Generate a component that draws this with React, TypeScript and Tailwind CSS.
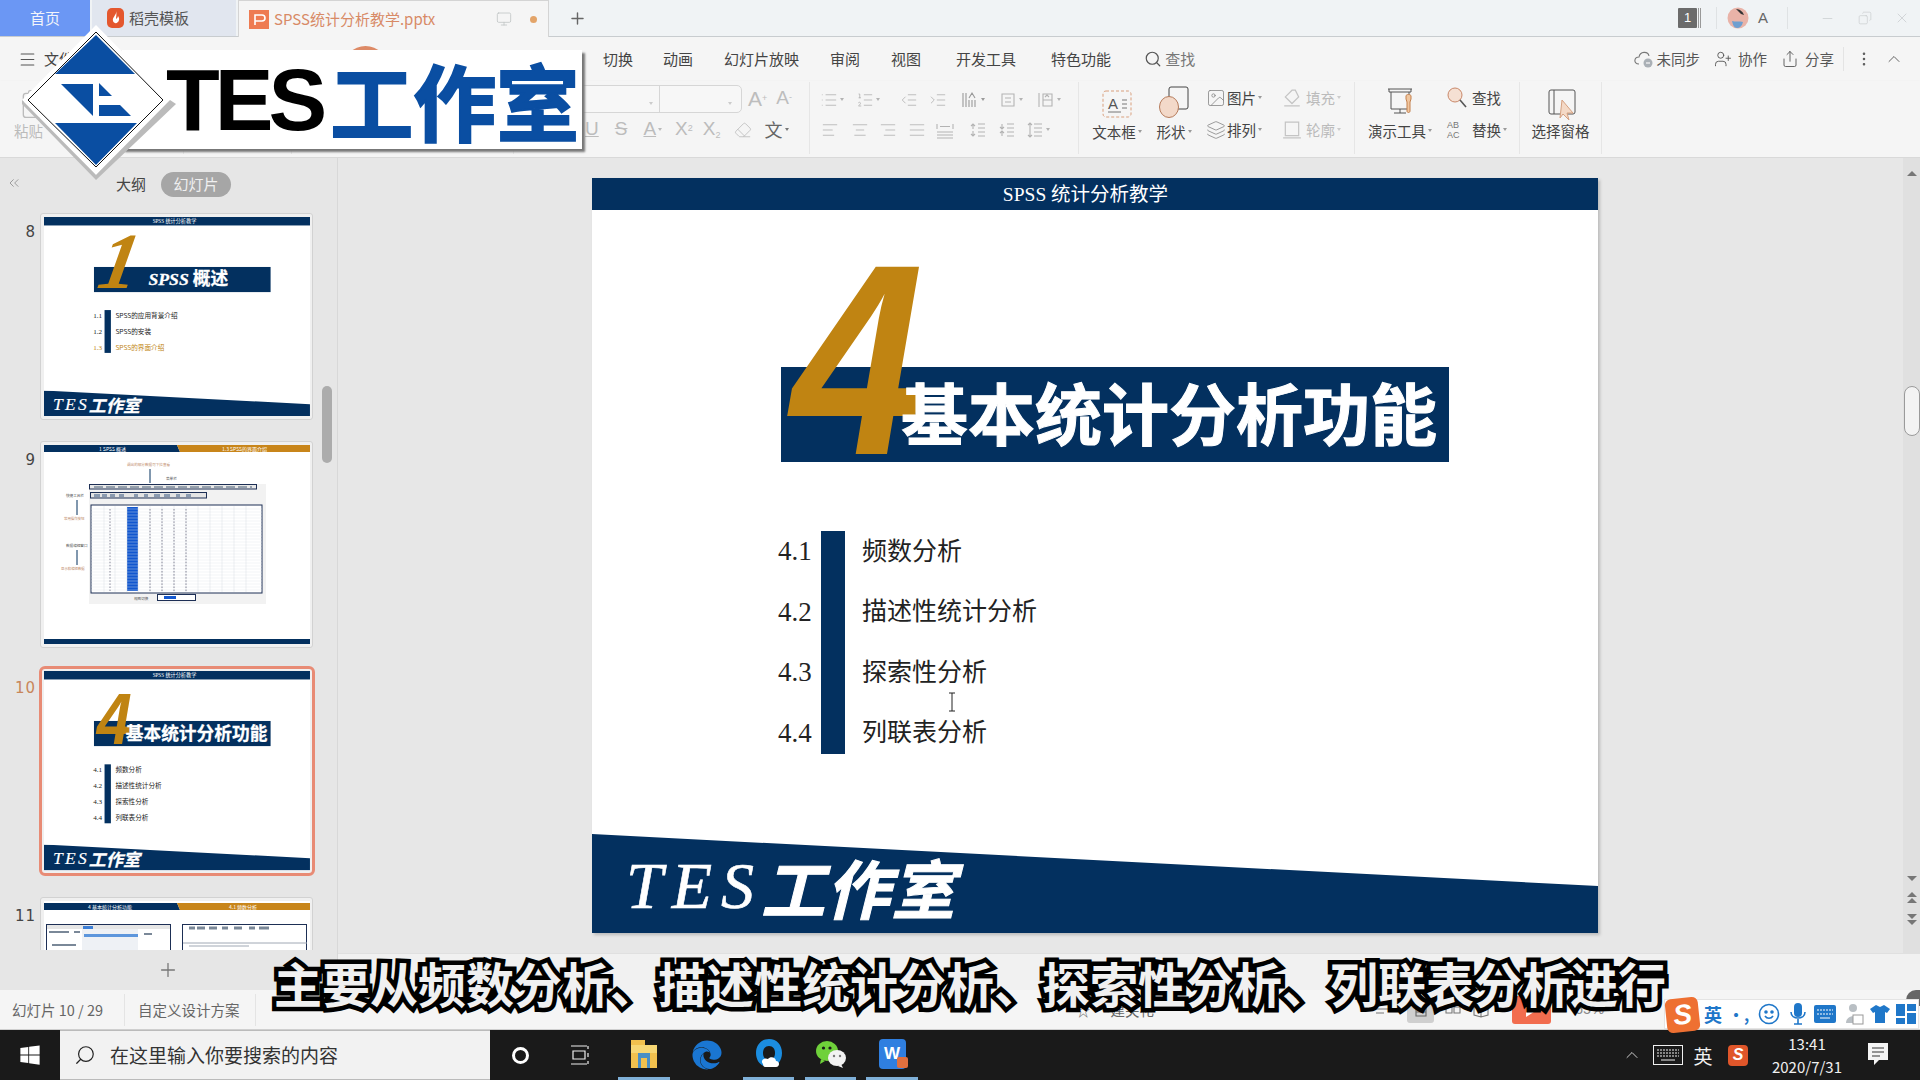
import React from 'react';
import { Menu, Search, UserPlus, Share, MoreVertical, ChevronUp, Plus, Monitor, Minus, X, Copy, ChevronsLeft, List, ListOrdered, IndentDecrease, IndentIncrease, AlignLeft, AlignCenter, AlignRight, AlignJustify, Image, Layers, Eraser, Clipboard } from 'lucide-react';
import { FaWindows, FaEdge } from 'react-icons/fa';

const Caret = ({ c = '#9a9a9a' }: { c?: string }) => (
  <span className="ml-[2px] inline-block h-0 w-0 border-x-[2.5px] border-t-[3px] border-x-transparent" style={{ borderTopColor: c }} />
);

const LineIcon = ({ d, c = '#b5b5b5', s = 18, className = '' }: { d: string; c?: string; s?: number; className?: string }) => (
  <svg width={s} height={s} viewBox="0 0 18 18" fill="none" stroke={c} strokeWidth="1.1" className={`shrink-0 ${className}`}><path d={d} /></svg>
);

function Header() {
  return (
    <div className="relative z-0 flex h-[37px] shrink-0 items-stretch border-b border-[#c8cccf] bg-[#f0f3f5] text-[15px]">
      <div className="flex w-[90px] items-center justify-center bg-[#6b97f4] text-[#f2f5fb]">首页</div>
      <div className="ml-[2px] flex w-[144px] items-center gap-[5px] bg-[#e1e6ef] pl-[15px] text-[#555]">
        <svg width="17" height="20" viewBox="0 0 17 20"><rect width="17" height="20" rx="5" fill="#e4572e" /><path d="M9 3c1 4-4 6-3 10 1 3 5 3 6-1 .5-2-.5-3-1-4-.5 2-1 2-2 3 0-3 1-5 0-8z" fill="#fff" /></svg>
        <span>稻壳模板</span>
      </div>
      <div className="ml-[2px] -mb-px flex w-[311px] items-center border-x border-t border-[#d4d4d4] bg-[#f5f5f5] pl-[10px] text-[#d88a66]">
        <svg width="20" height="19" viewBox="0 0 20 19"><rect width="20" height="19" fill="#ee7b52" /><path d="M6 15V5h7a3 3 0 0 1 0 6H6" fill="none" stroke="#fff" strokeWidth="1.6" /></svg>
        <span className="ml-[5px] w-[222px] whitespace-nowrap">SPSS统计分析教学.pptx</span>
        <Monitor size={16} strokeWidth={1.2} className="text-[#bfc4c4]" />
        <span className="ml-[18px] h-[7px] w-[7px] rounded-full bg-[#e3a469]" />
      </div>
      <div className="ml-[19px] flex items-center"><Plus size={19} strokeWidth={1.8} className="text-[#666]" /></div>
      <div className="ml-auto flex items-center">
        <span className="flex h-[20px] w-[19px] items-center justify-center rounded-[1px] bg-[#6b6b6b] [font-family:'Liberation_Sans',sans-serif] text-[13px] text-white">1</span>
        <span className="ml-[1px] h-[20px] w-[1px] bg-[#999]" /><span className="ml-[1px] h-[20px] w-[1px] bg-[#999]" />
        <span className="ml-[15px] h-[22px] w-[1px] bg-[#dfe2e4]" />
        <svg width="22" height="22" viewBox="0 0 22 22" className="ml-[10px]"><circle cx="11" cy="11" r="10.5" fill="#e9b3a8" /><path d="M5 14c3 1 8 0 11 1-1 4-3 6-6 6-3 0-4-3-5-7z" fill="#6f9fd0" /><path d="M9 2c4 0 7 3 8 6l-3-1-5-5z" fill="#333" /></svg>
        <span className="ml-[9px] w-[14px] [font-family:'Liberation_Sans',sans-serif] text-[15px] text-[#666]">A</span>
        <span className="ml-[15px] h-[22px] w-[1px] bg-[#dfe2e4]" />
        <Minus size={15} strokeWidth={1} className="ml-[32px] text-[#c2c6c8]" />
        <Copy size={14} strokeWidth={1} className="ml-[23px] -scale-x-100 text-[#c2c6c8]" />
        <X size={16} strokeWidth={1} className="ml-[22px] mr-[10px] text-[#c2c6c8]" />
      </div>
    </div>
  );
}

function MenuRow() {
  const items = [
    ['切换', 'ml-[0px]'], ['动画', 'ml-[30px]'], ['幻灯片放映', 'ml-[31px]'], ['审阅', 'ml-[31px]'], ['视图', 'ml-[31px]'], ['开发工具', 'ml-[35px]'], ['特色功能', 'ml-[35px]'],
  ];
  return (
    <div className="flex h-[44px] shrink-0 items-center text-[15px] text-[#444]">
      <Menu size={19} strokeWidth={1.3} className="ml-[18px] text-[#555]" />
      <span className="ml-[7px]">文件</span>
      <span className="ml-[269px] h-[26px] w-[45px] rounded-t-full bg-[#dd8a66]" />
      <div className="ml-[215px] flex">
        {items.map(([t, m]) => <span key={t} className={m}>{t}</span>)}
      </div>
      <Search size={18} strokeWidth={1.6} className="ml-[33px] text-[#555]" />
      <span className="ml-[3px] text-[#777]">查找</span>
      <div className="ml-auto flex items-center text-[14.5px] text-[#555]">
        <svg width="22" height="20" viewBox="0 0 22 20" fill="none" stroke="#777" strokeWidth="1.1"><path d="M5 15c-6 0-5-7 0-7 1-6 9-6 10-1" /><circle cx="14" cy="14" r="4.5" fill="#aab0b6" stroke="none" /><path d="M12 14h4" stroke="#fff" /></svg>
        <span className="ml-[1px]">未同步</span>
        <UserPlus size={18} strokeWidth={1.2} className="ml-[14px]" />
        <span className="ml-[6px]">协作</span>
        <Share size={18} strokeWidth={1.2} className="ml-[14px]" />
        <span className="ml-[6px]">分享</span>
        <span className="ml-[9px] h-[24px] w-[1px] bg-[#e4e4e4]" />
        <MoreVertical size={18} strokeWidth={1.4} className="ml-[11px]" />
        <ChevronUp size={20} strokeWidth={1.1} className="ml-[11px] mr-[16px]" />
      </div>
    </div>
  );
}

const Group = ({ w, children, className = '' }: { w: string; children?: React.ReactNode; className?: string }) => (
  <div className={`relative h-[72px] shrink-0 border-r border-[#e6e6e6] ${w} ${className}`}>{children}</div>
);

const G = '#b3b3b3';
const Ribbon = () => (
  <div className="flex h-[77px] shrink-0 items-start border-b border-[#d9d9d9] pt-[1px] text-[14.5px] text-[#444] shadow-[0_1px_2px_#ddd]">
    <Group w="w-[184px]">
      <Clipboard size={32} strokeWidth={1} className="ml-[18px] mt-[6px] text-[#bbb]" />
      <span className="ml-[14px] block text-[#bbb]">粘贴</span>
    </Group>
    <Group w="w-[108px]" />
    <Group w="w-[222px]" />
    <Group w="w-[296px]" className="flex flex-col">
      <div className="mt-[2px] flex h-[29px] items-center">
        <div className="ml-[46px] flex h-[28px] w-[182px] items-center rounded-r-[5px] border border-[#d6d6d6] bg-[#f7f7f7]">
          <span className="ml-[86px]"><Caret c="#ccc" /></span>
          <span className="ml-[6px] h-full w-[1px] bg-[#d6d6d6]" />
          <span className="ml-[66px]"><Caret c="#ccc" /></span>
        </div>
        <span className="ml-[6px] [font-family:'Liberation_Sans',sans-serif] text-[21px] text-[#bdbdbd]">A<sup className="text-[9px]">+</sup></span>
        <span className="ml-[9px] [font-family:'Liberation_Sans',sans-serif] text-[19px] text-[#bdbdbd]">A<sup className="text-[9px]">-</sup></span>
      </div>
      <div className="mt-[2px] flex h-[29px] items-center [font-family:'Liberation_Sans',sans-serif] text-[19px] text-[#bcbcbc]">
        <span className="ml-[71px] underline">U</span>
        <span className="ml-[16px] line-through">S</span>
        <span className="ml-[16px] underline">A</span><Caret c="#bbb" />
        <span className="ml-[13px]">X<sup className="text-[9px]">2</sup></span>
        <span className="ml-[10px]">X<sub className="text-[9px]">2</sub></span>
        <Eraser size={18} strokeWidth={1.1} className="ml-[13px]" />
        <span className="ml-[13px] text-[18px] text-[#666] [font-family:'Noto_Sans_CJK_SC',sans-serif]">文</span><Caret c="#777" />
      </div>
    </Group>
    <Group w="w-[269px]" className="flex flex-col">
      <div className="mt-[3px] flex h-[29px] items-center">
        <List size={18} strokeWidth={1.1} color={G} className="ml-[10px]" /><Caret c={G} />
        <ListOrdered size={18} strokeWidth={1.1} color={G} className="ml-[12px]" /><Caret c={G} />
        <IndentDecrease size={18} strokeWidth={1.1} color={G} className="ml-[20px]" />
        <IndentIncrease size={18} strokeWidth={1.1} color={G} className="ml-[11px]" />
        <LineIcon d="M2 2v14M5 2v14M8 9v7M11 9v7M14 9v7M8 7l3-5 3 5" c="#999" className="ml-[14px]" /><Caret />
        <LineIcon d="M3 3h12v12H3zM6 7h6M6 11h6" c={G} className="ml-[14px]" /><Caret c={G} />
        <LineIcon d="M2 2v14M6 3h9v12H6zM6 9h9M8 6l2-2 2 2" c={G} className="ml-[14px]" /><Caret c={G} />
      </div>
      <div className="mt-[1px] flex h-[29px] items-center">
        <AlignLeft size={18} strokeWidth={1.1} color={G} className="ml-[11px]" />
        <AlignCenter size={18} strokeWidth={1.1} color={G} className="ml-[12px]" />
        <AlignRight size={18} strokeWidth={1.1} color={G} className="ml-[10px]" />
        <AlignJustify size={18} strokeWidth={1.1} color={G} className="ml-[11px]" />
        <LineIcon d="M1 3v5M17 3v5M4 5.5h10M1 11h16M1 14h16M1 17h16" c={G} className="ml-[10px]" />
        <LineIcon d="M9 3h7M9 7h7M9 11h7M9 15h7M4 8V3M2 5l2-2 2 2M4 10v5M2 13l2 2 2-2" c={G} className="ml-[15px]" />
        <LineIcon d="M9 3h7M9 7h7M9 11h7M9 15h7M4 3v5M2 6l2 2 2-2M4 15v-5M2 12l2-2 2 2" c={G} className="ml-[11px]" />
        <LineIcon d="M8 3h8M8 7h8M8 11h8M8 15h8M4 2v14M2 4l2-2 2 2M2 14l2 2 2-2" c={G} className="ml-[10px]" /><Caret c={G} />
      </div>
    </Group>
    <Group w="w-[276px]" className="flex">
      <div className="ml-[12px] flex w-[52px] flex-col items-center">
        <svg width="30" height="28" viewBox="0 0 30 28" className="mt-[8px]" fill="none"><rect x="1" y="1" width="28" height="26" rx="3" stroke="#d99f7d" strokeDasharray="3 2" /><text x="6" y="19" fontSize="15" fill="#555" fontFamily="Liberation Sans">A</text><path d="M6 22h13M20 10h5M20 14h5M20 18h5" stroke="#777" /></svg>
        <span className="mt-[3px] flex items-center whitespace-nowrap">文本框<Caret /></span>
      </div>
      <div className="ml-[8px] flex w-[46px] flex-col items-center">
        <svg width="32" height="34" viewBox="0 0 32 34" className="mt-[3px]" fill="none"><rect x="11" y="2" width="19" height="22" rx="2" stroke="#444" /><ellipse cx="11" cy="22" rx="9.5" ry="10.5" fill="#f3d9c9" stroke="#b67c5c" /></svg>
        <span className="mt-[2px] flex items-center whitespace-nowrap">形状<Caret /></span>
      </div>
      <div className="ml-[9px] flex w-[74px] flex-col gap-[10px] pt-[5px]">
        <span className="flex items-center whitespace-nowrap"><Image size={20} strokeWidth={1} className="mr-[1px] text-[#888]" />图片<Caret /></span>
        <span className="flex items-center whitespace-nowrap"><Layers size={20} strokeWidth={1} className="mr-[1px] text-[#888]" />排列<Caret /></span>
      </div>
      <div className="ml-[2px] flex w-[68px] flex-col gap-[10px] pt-[5px] text-[#bbb]">
        <span className="flex items-center whitespace-nowrap"><LineIcon s={20} d="M9 2L3 8l6 6 6-6-3-6zM2 16h14" c="#c4c4c4" className="mr-[4px]" />填充<Caret c="#ccc" /></span>
        <span className="flex items-center whitespace-nowrap"><LineIcon s={20} d="M3 2h12v12H3zM1 16h16" c="#c4c4c4" className="mr-[4px]" />轮廓<Caret c="#ccc" /></span>
      </div>
    </Group>
    <Group w="w-[165px]" className="flex">
      <div className="ml-[6px] flex w-[78px] flex-col items-center">
        <svg width="30" height="30" viewBox="0 0 30 30" fill="none" stroke="#555" className="mt-[4px]"><path d="M3 3h24M4 3v3h22V3M6 6v17h18V6M15 23v4M9 27h12" /><path d="M21 10c0-2 5-2 5 0v3l-1 3v9c0 2-3 2-3 0v-9l-1-3z" fill="#f0c69f" stroke="#c4804d" /></svg>
        <span className="mt-[4px] flex items-center whitespace-nowrap">演示工具<Caret /></span>
      </div>
      <div className="ml-[8px] flex flex-col gap-[10px] pt-[5px]">
        <span className="flex items-center whitespace-nowrap"><svg width="20" height="22" viewBox="0 0 20 22" fill="none" className="mr-[5px]"><circle cx="8" cy="8" r="7" fill="#f5e0d3" stroke="#c9886a" /><path d="M13 13l6 7" stroke="#555" strokeWidth="1.6" /></svg>查找</span>
        <span className="flex items-center whitespace-nowrap"><span className="mr-[3px] w-[22px] [font-family:'Liberation_Sans',sans-serif] text-[9px] leading-[10px] text-[#777]">AB<br />AC</span>替换<Caret /></span>
      </div>
    </Group>
    <Group w="w-[82px]" className="flex flex-col items-center">
      <svg width="30" height="36" viewBox="0 0 30 36" fill="none" className="-mb-[4px] mt-[6px]"><rect x="3" y="2" width="26" height="24" rx="2" stroke="#555" /><path d="M8 2v24" stroke="#555" /><path d="M16 12l11 13h-6l2 7-6-6-3 4z" fill="#f4d9c6" stroke="#d5a080" /></svg>
      <span className="whitespace-nowrap">选择窗格</span>
    </Group>
  </div>
);

const Navy = 'bg-[#03305f]';

function ListRows({ rows }: { rows: { n: string; t: string; hi?: boolean }[] }) {
  return (
    <div className="ml-[186px] flex">
      <div className="flex w-[43px] flex-col gap-[19.5px] [font-family:'Liberation_Serif',serif] text-[27px] text-[#222]">
        {rows.map(r => <span key={r.n} className={`flex h-[41px] items-center ${r.hi ? 'text-[#c08412]' : ''}`}>{r.n}</span>)}
      </div>
      <div className={`w-[24px] ${Navy}`} />
      <div className="ml-[17px] flex flex-col gap-[19.5px] [font-family:'Noto_Sans_CJK_SC',sans-serif] text-[25px] text-[#222]">
        {rows.map(r => <span key={r.n} className={`flex h-[41px] -translate-y-[2px] items-center whitespace-nowrap ${r.hi ? 'text-[#c08412]' : ''}`}>{r.t}</span>)}
      </div>
    </div>
  );
}

function SlideBody({ num, title, rows, serifNum, center }: { num: string; title: React.ReactNode; rows: { n: string; t: string; hi?: boolean }[]; serifNum?: boolean; center?: boolean }) {
  return (
    <div className="flex h-[755px] w-[1006px] flex-col bg-white">
      <div className={`flex h-[32px] shrink-0 items-center justify-center pr-[19px] pt-[1px] ${Navy} text-[19.5px] text-white`}>
        <span className="[font-family:'Liberation_Serif','Noto_Sans_CJK_SC',serif]">SPSS 统计分析教学</span>
      </div>
      <div className={`relative ml-[189px] mt-[157px] flex h-[95px] w-[668px] shrink-0 items-center ${Navy}`}>
        <span className={serifNum
          ? "absolute bottom-[-34px] left-[24px] -skew-x-[10deg] [font-family:'Liberation_Serif',serif] text-[300px] font-bold italic leading-none text-[#c08412]"
          : "absolute bottom-[-34px] left-[-8px] origin-right scale-x-[0.88] [font-family:'Liberation_Sans',sans-serif] text-[272px] font-bold italic leading-none text-[#c08412]"}>{num}</span>
        <span className={`relative -mt-[9px] whitespace-nowrap text-[67px] font-bold leading-none text-white [-webkit-text-stroke:1px_#fff] ${center ? 'ml-[206px]' : 'ml-[120px]'}`}>{title}</span>
      </div>
      <div className={rows.length === 3 ? 'mt-[68px]' : 'mt-[69px]'}><ListRows rows={rows} /></div>
      <div className={`mt-auto flex h-[99px] shrink-0 items-center pl-[34px] pt-[4px] ${Navy} [clip-path:polygon(0_0,100%_52.5%,100%_100%,0_100%)]`}>
        <span className="[font-family:'Liberation_Serif',serif] text-[66px] italic leading-none tracking-[9px] text-white [-webkit-text-stroke:0.6px_#fff]">TES</span>
        <span className="-ml-[2px] text-[64px] font-bold italic leading-none tracking-[1px] text-white [font-family:'Noto_Sans_CJK_SC',sans-serif] [-webkit-text-stroke:1px_#fff]">工作室</span>
      </div>
    </div>
  );
}

const rows10 = [{ n: '4.1', t: '频数分析' }, { n: '4.2', t: '描述性统计分析' }, { n: '4.3', t: '探索性分析' }, { n: '4.4', t: '列联表分析' }];
const rows8 = [{ n: '1.1', t: 'SPSS的应用背景介绍' }, { n: '1.2', t: 'SPSS的安装' }, { n: '1.3', t: 'SPSS的界面介绍', hi: true }];

const Thumb = ({ n, active, children, clip }: { n: string; active?: boolean; children: React.ReactNode; clip?: boolean }) => (
  <div className="flex h-[207px] shrink-0 items-start">
    <span className={`w-[40px] shrink-0 pr-[4px] pt-[8px] text-right [font-family:'DejaVu_Sans',sans-serif] text-[15px] tracking-[1px] ${active ? 'text-[#c8865a]' : 'text-[#444]'}`}>{n}</span>
    <div className={`shrink-0 overflow-hidden ${active ? '-ml-[1px] -mt-[3px] h-[210px] w-[276px] rounded-[6px] border-[3px] border-[#e88b75] p-[2px]' : 'h-[207px] w-[273px] rounded-[3px] border-[1.5px] border-[#d2d2d2] p-[2.5px]'} bg-[#f0f0f0]`}>
      <div className={`${clip ? 'h-[200px]' : 'h-[199.6px]'} w-[266px] overflow-hidden bg-white`}>{children}</div>
    </div>
  </div>
);

const Scaled = ({ children }: { children: React.ReactNode }) => (
  <div className="w-[1006px] origin-top-left scale-[0.2644]">{children}</div>
);

const Thumb9 = () => (
  <svg width="266" height="200" viewBox="0 0 266 200">
    <rect width="266" height="200" fill="#fff" />
    <path d="M0 0H133L136 7H0z" fill="#03305f" />
    <path d="M133 0H266V7H136z" fill="#c8851a" />
    <text x="55" y="6" fontSize="5" fill="#fff" fontFamily="Noto Sans CJK SC">1 SPSS 概述</text>
    <text x="178" y="6" fontSize="5" fill="#fff" fontFamily="Noto Sans CJK SC">1.3 SPSS的界面介绍</text>
    <text x="83" y="21" fontSize="3.6" fill="#c08a6a" fontFamily="Noto Sans CJK SC">调出的部分数据可下拉查看</text>
    <path d="M106 24v14" stroke="#03305f" />
    <text x="122" y="35" fontSize="3.6" fill="#555" fontFamily="Noto Sans CJK SC">菜单栏</text>
    <rect x="45" y="39" width="177" height="120" fill="#f2f2f2" />
    <rect x="45.5" y="39.5" width="167" height="4.5" fill="#e8e8e8" stroke="#1d2f55" />
    <path d="M50 42h158" stroke="#7a8898" strokeWidth="1.4" strokeDasharray="9 3" />
    <rect x="46.5" y="47.5" width="116" height="5.5" fill="#e4e4e4" stroke="#1d2f55" />
    <path d="M50 49h6v3h-6zM58 49h5v3h-5zM66 49h5v3h-5zM75 49h5v3h-5zM90 49h4v3h-4zM100 49h4v3h-4zM110 49h6v3h-6zM120 49h6v3h-6zM132 49h4v3h-4zM142 49h5v3h-5z" fill="#8a9ab0" />
    <rect x="47" y="60" width="171" height="88" fill="#fff" stroke="#1d2f55" />
    <rect x="83" y="62" width="11" height="84" fill="#1257cf" />
    <path d="M47 64h171M47 67h171M47 70h171M47 73h171M47 76h171M47 79h171M47 82h171M47 85h171M47 88h171M47 91h171M47 94h171M47 97h171M47 100h171M47 103h171M47 106h171M47 109h171M47 112h171M47 115h171M47 118h171M47 121h171M47 124h171M47 127h171M47 130h171M47 133h171M47 136h171M47 139h171M47 142h171M47 145h171" stroke="#dde3ea" strokeWidth=".4" />
    <path d="M60 61v86M71 61v86M83 61v86M94 61v86M106 61v86M118 61v86M130 61v86M142 61v86M154 61v86M166 61v86M178 61v86M190 61v86M202 61v86" stroke="#cfd6de" strokeWidth=".4" />
    <path d="M66 64v82M106 64v82M118 64v82M130 64v82M142 64v82" stroke="#889" strokeWidth="1" strokeDasharray="1.5 1.6" />
    <rect x="113.5" y="149.5" width="38" height="6" fill="#fff" stroke="#1d2f55" />
    <rect x="120" y="151" width="12" height="3" fill="#1257cf" />
    <text x="90" y="155" fontSize="3.6" fill="#555" fontFamily="Noto Sans CJK SC">视图切换</text>
    <text x="22" y="52" fontSize="3.6" fill="#555" fontFamily="Noto Sans CJK SC">快捷工具栏</text>
    <path d="M33 55v15" stroke="#03305f" />
    <text x="20" y="75" fontSize="3.4" fill="#c08a6a" fontFamily="Noto Sans CJK SC">常用操作按钮</text>
    <text x="22" y="102" fontSize="3.6" fill="#555" fontFamily="Noto Sans CJK SC">数据编辑窗口</text>
    <path d="M33 105v15" stroke="#03305f" />
    <text x="17" y="125" fontSize="3.4" fill="#c08a6a" fontFamily="Noto Sans CJK SC">显示和编辑数据</text>
    <rect y="194" width="266" height="6" fill="#03305f" />
  </svg>
);

const Thumb11 = () => (
  <svg width="266" height="200" viewBox="0 0 266 200">
    <rect width="266" height="200" fill="#fff" />
    <path d="M0 2H133L136 9H0z" fill="#03305f" />
    <path d="M133 2H266V9H136z" fill="#c8851a" />
    <text x="44" y="8" fontSize="5" fill="#fff" fontFamily="Noto Sans CJK SC">4 基本统计分析功能</text>
    <text x="185" y="8" fontSize="5" fill="#fff" fontFamily="Noto Sans CJK SC">4.1 频数分析</text>
    <rect x="2.5" y="23.5" width="124" height="60" fill="#fff" stroke="#1d2f55" />
    <rect x="138.5" y="23.5" width="124" height="60" fill="#fff" stroke="#1d2f55" />
    <rect x="3" y="24" width="123" height="4" fill="#e6e6e6" />
    <rect x="39" y="25" width="10" height="3" fill="#3d7fd6" />
    <rect x="38" y="28" width="56" height="24" fill="#eef1f5" />
    <rect x="40" y="33" width="54" height="3" fill="#5d96dc" />
    <path d="M5 31h20M30 31h6M8 44h24M100 33h8" stroke="#7a8898" strokeWidth="2" />
    <path d="M145 27h6M153 27h8M165 27h8M178 27h6M190 27h8M205 27h6M215 27h10" stroke="#7a8898" strokeWidth="3" />
    <path d="M139 42h124M145 45h60M150 51h20" stroke="#a0a8b4" strokeWidth="1" />
  </svg>
);

function Sidebar() {
  return (
    <div className="flex w-[338px] shrink-0 flex-col border-r border-[#d8d8d8] bg-[#e6e6e6]">
      <div className="flex h-[55px] shrink-0 items-start text-[15px] text-[#444]">
        <ChevronsLeft size={16} strokeWidth={1} className="ml-[6px] mt-[17px] text-[#777]" />
        <span className="ml-[94px] mt-[15px]">大纲</span>
        <span className="ml-[15px] mt-[14px] flex h-[25px] w-[70px] items-center justify-center rounded-full bg-[#a6a6a6] text-[#f0f0f0]">幻灯片</span>
      </div>
      <div className="relative h-[737px] shrink-0 overflow-hidden">
        <div className="flex flex-col gap-[21px]">
          <Thumb n="8"><Scaled><SlideBody num="1" serifNum center title={<><span className="[font-family:'Liberation_Serif',serif] italic">SPSS</span> 概述</>} rows={rows8} /></Scaled></Thumb>
          <Thumb n="9"><Thumb9 /></Thumb>
          <Thumb n="10" active><Scaled><SlideBody num="4" title="基本统计分析功能" rows={rows10} /></Scaled></Thumb>
          <Thumb n="11" clip><Thumb11 /></Thumb>
        </div>
        <div className="absolute right-[5px] top-[173px] h-[77px] w-[10px] rounded-[5px] bg-[#acacac]" />
      </div>
      <div className="flex flex-1 items-center justify-center pr-[2px]"><Plus size={22} strokeWidth={1.4} className="text-[#777]" /></div>
    </div>
  );
}

const Arrow = ({ up }: { up?: boolean }) => (
  <span className={`block h-0 w-0 border-x-[5px] border-x-transparent ${up ? 'border-b-[5px] border-b-[#777]' : 'border-t-[5px] border-t-[#777]'}`} />
);

function Canvas() {
  return (
    <div className="flex min-w-0 flex-1 flex-col">
      <div className="flex h-[796px] shrink-0 border-b border-[#e0e0e0] bg-[#e7e7e7]">
        <div className="min-w-0 flex-1 pl-[254px] pt-[20px]">
          <div className="w-[1006px] shadow-[2px_2px_3px_#bbb]">
            <SlideBody num="4" title="基本统计分析功能" rows={rows10} />
          </div>
        </div>
        <div className="flex w-[17px] shrink-0 flex-col items-center bg-[#e0e0e0]">
          <span className="mt-[13px]"><Arrow up /></span>
          <div className="mt-[210px] h-[50px] w-[16px] rounded-[8px] border border-[#9a9a9a] bg-[#f3f3f3]" />
          <span className="mt-[440px]"><Arrow /></span>
          <span className="mt-[11px] flex flex-col gap-[1px]"><Arrow up /><Arrow up /></span>
          <span className="mt-[11px] flex flex-col gap-[1px]"><Arrow /><Arrow /></span>
        </div>
      </div>
      <div className="flex-1 bg-[#f1f1f1]" />
    </div>
  );
}

function StatusBar() {
  return (
    <div className="flex h-[40px] shrink-0 items-center border-b border-[#cfcfcf] bg-[#f5f5f5] text-[14.5px] text-[#666]">
      <span className="ml-[12px] w-[112px] whitespace-nowrap">幻灯片 10 / 29</span>
      <span className="h-[32px] w-[1px] bg-[#e4e4e4]" />
      <span className="ml-[13px] w-[117px] whitespace-nowrap">自定义设计方案</span>
      <span className="h-[32px] w-[1px] bg-[#e4e4e4]" />
      <span className="ml-[820px] text-[#777]">☆</span>
      <span className="ml-[20px] whitespace-nowrap">建关礼</span><Caret />
      <LineIcon d="M3 4h12M3 8h12M3 12h8" c="#777" className="ml-[213px]" /><Caret c="#555" />
      <span className="ml-[10px] flex h-[27px] w-[27px] items-center justify-center rounded-[3px] bg-[#cfcfcf]"><LineIcon d="M4 3h10v12H4zM4 11h10" c="#666" /></span>
      <LineIcon d="M2 6h6v6H2zM10 6h6v6h-6z" c="#777" className="ml-[10px]" />
      <LineIcon d="M2 4l7 2 7-2v10l-7 2-7-2zM9 6v10" c="#777" className="ml-[10px]" />
      <span className="ml-[22px] flex h-[28px] w-[39px] items-center justify-center rounded-[3px] bg-[#f26d4f]"><span className="h-0 w-0 border-y-[7px] border-l-[11px] border-y-transparent border-l-white" /></span>
      <span className="ml-[24px] [font-family:'Liberation_Sans',sans-serif] text-[#888]">65%</span>
    </div>
  );
}

function Taskbar() {
  return (
    <div className="flex h-[50px] shrink-0 bg-[#1a1a1a]">
      <div className="flex w-[60px] items-center justify-center"><FaWindows size={22} className="text-white" /></div>
      <div className="flex w-[430px] items-center border-y border-[#bbb] bg-[#f2f2f2] text-[19px] text-[#333]">
        <Search size={22} strokeWidth={1.3} className="ml-[14px] -scale-x-100 text-[#222]" />
        <span className="ml-[14px] whitespace-nowrap">在这里输入你要搜索的内容</span>
      </div>
      <div className="flex w-[60px] items-center justify-center"><span className="h-[17px] w-[17px] rounded-full border-[3px] border-white" /></div>
      <div className="flex w-[60px] items-center justify-center">
        <svg width="20" height="22" viewBox="0 0 20 22" fill="none" stroke="#eee" strokeWidth="1.2"><path d="M3 7h12v8H3zM1 2h16M1 20h16M18 2v3M18 9v4M18 17v3" /></svg>
      </div>
      <div className="ml-[8px] flex w-[52px] items-center justify-center border-b-[3px] border-[#7fb0d8]">
        <svg width="28" height="30" viewBox="0 0 28 30"><path d="M1 1h14v5h12v23H1z" fill="#f2c14e" /><path d="M1 6h26v8H1z" fill="#f7d774" /><path d="M8 14h12v15H8z" fill="#4a8fc4" /><path d="M11 19h6v10h-6z" fill="#f2c14e" /></svg>
      </div>
      <div className="ml-[11px] flex w-[52px] items-center justify-center"><FaEdge size={30} className="text-[#1a76d2]" /></div>
      <div className="ml-[10px] flex w-[51px] items-center justify-center border-b-[3px] border-[#7fb0d8]">
        <svg width="30" height="32" viewBox="0 0 30 32"><path d="M15 1C7 1 2 7 2 15c0 8 5 14 13 14 8 0 13-6 13-14S23 1 15 1zm0 7c4 0 6 3 6 7s-2 7-6 7-6-3-6-7 2-7 6-7z" fill="#1b8de0" /><path d="M9 26c-3-3 1-7 5-5 2-3 8-2 8 2 4 0 4 6 0 6H11c-1 0-2-1-2-3z" fill="#fff" /></svg>
      </div>
      <div className="ml-[11px] flex w-[51px] items-center justify-center border-b-[3px] border-[#7fb0d8]">
        <svg width="32" height="30" viewBox="0 0 32 30"><ellipse cx="12" cy="12" rx="11" ry="10" fill="#6fd13a" /><path d="M6 20l-1 5 5-3z" fill="#6fd13a" /><circle cx="8.5" cy="9" r="1.6" fill="#1a1a1a" /><circle cx="15" cy="9" r="1.6" fill="#1a1a1a" /><ellipse cx="22" cy="19" rx="9" ry="8" fill="#f2f2f2" /><path d="M26 25l2 4-5-2z" fill="#f2f2f2" /><circle cx="19" cy="17" r="1.2" fill="#777" /><circle cx="25" cy="17" r="1.2" fill="#777" /></svg>
      </div>
      <div className="ml-[10px] flex w-[52px] items-center justify-center border-b-[3px] border-[#7fb0d8]">
        <span className="relative flex h-[30px] w-[27px] items-center justify-center rounded-[4px] bg-[#2f7fe0] [font-family:'Liberation_Sans',sans-serif] text-[17px] font-bold leading-none text-white">W
          <span className="absolute bottom-[1px] right-[-2px] h-[11px] w-[11px] rounded-[2px] bg-[#e0703f]" />
        </span>
      </div>
      <div className="ml-auto flex items-center text-[#f0f0f0]">
        <div className="flex w-[24px] justify-center"><ChevronUp size={20} strokeWidth={1} /></div>
        <div className="flex w-[48px] justify-center">
          <svg width="30" height="20" viewBox="0 0 30 20" fill="none" stroke="#f0f0f0"><rect x=".5" y=".5" width="29" height="19" /><path d="M4 5h22M4 8h22M4 11h22" strokeDasharray="2 1" /><path d="M8 15h14" /></svg>
        </div>
        <div className="flex w-[22px] justify-center text-[19px] leading-none">英</div>
        <div className="flex w-[48px] justify-center">
          <span className="flex h-[21px] w-[20px] items-center justify-center rounded-[4px] bg-[#e0562a] [font-family:'Liberation_Sans',sans-serif] text-[16px] font-bold italic leading-none text-white">S</span>
        </div>
        <div className="flex w-[90px] flex-col items-center gap-[3px] text-[15px] leading-[20px]"><span>13:41</span><span>2020/7/31</span></div>
        <div className="flex w-[52px] justify-center">
          <svg width="24" height="26" viewBox="0 0 24 26"><path d="M2 1h20v17H13l-5 5v-5H2z" fill="#f4f4f4" /><path d="M6 6h12M6 10h12M6 14h8" stroke="#333" /></svg>
        </div>
        <div className="w-[16px]" />
      </div>
    </div>
  );
}

function LogoOverlay() {
  return (
    <div className="absolute left-[122px] top-[50px] flex h-[99px] w-[460px] items-center bg-white pl-[44px] shadow-[3px_3px_2px_#777]">
      <svg width="160" height="160" viewBox="16 20 160 160" className="absolute left-[-106px] top-[-30px]">
        <path d="M96 25L170 100 96 175 22 100z" fill="#fff" />
        <path d="M96 175L170 100 176 104 96 180 22 104 22 100z" fill="#bbb" />
        <path d="M96 32L163 100 96 167 28 100z" fill="#fff" stroke="#111" strokeWidth="1" />
        <path d="M96 35L135 74H55z" fill="#0a4ea2" />
        <path d="M55 123H137L96 165z" fill="#0a4ea2" />
        <path d="M61 84H93V116z" fill="#0a4ea2" />
        <path d="M99 83V96H112z" fill="#0a4ea2" />
        <path d="M99 105H120L131 116H99z" fill="#0a4ea2" />
      </svg>
      <span className="relative [font-family:'Liberation_Sans',sans-serif] text-[88px] font-bold leading-none tracking-[-5px] text-black">TES</span>
      <span className="ml-[8px] whitespace-nowrap text-[83px] font-bold leading-none text-[#0a4ea2] [-webkit-text-stroke:2px_#0a4ea2]">工作室</span>
    </div>
  );
}

function ImeBar() {
  return (
    <div className="absolute left-[1664px] top-[999px] flex h-[30px] w-[255px] items-center border border-[#e4e4e4] bg-white text-[#1f77c9]">
      <span className="absolute left-[1px] top-[-2px] flex h-[34px] w-[33px] -rotate-6 items-center justify-center rounded-[6px] bg-[#ee7032] [font-family:'Liberation_Sans',sans-serif] text-[28px] font-bold italic leading-none text-white">S</span>
      <span className="ml-[39px] text-[18px] font-bold leading-none">英</span>
      <span className="ml-[6px] text-[16px] font-bold leading-none">•,</span>
      <svg width="22" height="22" viewBox="0 0 22 22" fill="none" stroke="#1f77c9" strokeWidth="1.6" className="ml-[9px]"><circle cx="11" cy="11" r="9.5" /><circle cx="8" cy="9" r="1" fill="#1f77c9" /><circle cx="14" cy="9" r="1" fill="#1f77c9" /><path d="M7 13c2 3 6 3 8 0" /></svg>
      <svg width="16" height="24" viewBox="0 0 16 24" className="ml-[10px]"><rect x="4" y="1" width="8" height="14" rx="4" fill="#1f77c9" /><path d="M1 10c0 8 14 8 14 0M8 17v5M4 22h8" fill="none" stroke="#1f77c9" strokeWidth="1.6" /></svg>
      <svg width="22" height="18" viewBox="0 0 22 18" className="ml-[8px]"><rect width="22" height="18" rx="2" fill="#1f77c9" /><path d="M3 5h16M3 9h16" stroke="#fff" strokeDasharray="2 1" /><path d="M6 13h10" stroke="#fff" /></svg>
      <svg width="20" height="22" viewBox="0 0 20 22" className="ml-[8px]"><circle cx="9" cy="5" r="4" fill="#b9bfc4" /><path d="M2 20c0-9 14-9 14 0z" fill="#b9bfc4" /><rect x="9" y="12" width="10" height="9" fill="#fff" stroke="#999" /></svg>
      <svg width="20" height="20" viewBox="0 0 20 20" className="ml-[6px]"><path d="M6 1l4 2 4-2 6 4-3 4-2-1v11H5V8L3 9 0 5z" fill="#1f77c9" /></svg>
      <svg width="20" height="20" viewBox="0 0 20 20" className="ml-[6px]"><rect width="9" height="12" fill="#1f77c9" /><rect x="11" width="9" height="7" fill="#1f77c9" /><rect y="14" width="9" height="6" fill="#1f77c9" /><rect x="11" y="9" width="9" height="11" fill="#1f77c9" /></svg>
    </div>
  );
}

export default function App() {
  return (
    <div className="relative flex h-[1080px] w-[1920px] flex-col overflow-hidden bg-[#f5f5f5] [font-family:'Noto_Sans_CJK_SC','Noto_Sans',sans-serif]">
      <Header />
      <MenuRow />
      <Ribbon />
      <div className="flex min-h-0 flex-1"><Sidebar /><Canvas /></div>
      <StatusBar />
      <Taskbar />

      <LogoOverlay />
      <svg width="10" height="20" viewBox="0 0 10 20" fill="none" stroke="#222" strokeWidth="1" className="absolute left-[947px] top-[692px]"><path d="M2 1h6M5 1v18M2 19h6" /></svg>
      <div className="absolute left-[1906px] top-[990px] h-[16px] w-[20px] rounded-tl-[10px] bg-[#666]" />
      <ImeBar />
      <div className="absolute left-[274px] top-[948px] whitespace-nowrap text-[48px] font-bold leading-[68px] text-[#f0f0f0] [-webkit-text-stroke:9px_#000] [paint-order:stroke_fill]">主要从频数分析、描述性统计分析、探索性分析、列联表分析进行</div>
    </div>
  );
}
